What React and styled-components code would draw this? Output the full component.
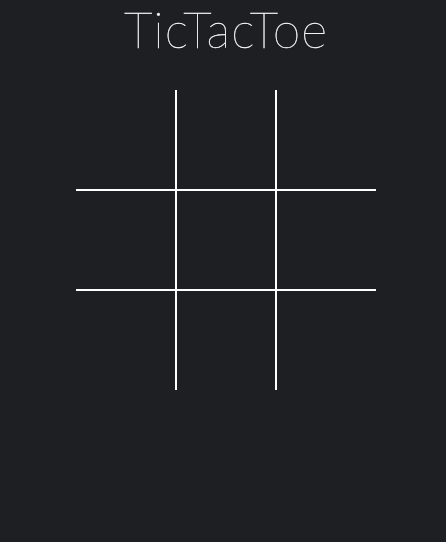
import React from "react";
import styled, { createGlobalStyle } from "styled-components";

const GlobalStyle = createGlobalStyle`
  html, body {
    margin: 0;
    padding: 0;
    background: #1e1f22;
  }
  body {
    font-family: Lato, "Open Sans", sans-serif;
    color: #ffffff;
  }
`;

const Page = styled.div`
  display: flex;
  flex-direction: column;
  align-items: center;
  padding-left: 6px;
  min-height: 542px;
`;

const Title = styled.h1`
  margin: 0;
  padding-top: 1px;
  font-size: 50px;
  line-height: 56px;
  font-weight: 100;
  letter-spacing: 1px;
  color: #f4f4f4;
  -webkit-text-stroke: 0.4px #f4f4f4;
`;

const Board = styled.div`
  margin-top: 33px;
  display: grid;
  grid-template-columns: repeat(3, 100px);
  grid-template-rows: repeat(3, 100px);
`;

const Cell = styled.div`
  box-sizing: border-box;
  border-color: #ffffff;
  border-style: solid;
  border-width: ${({ row, col }) =>
    `${row > 0 ? 1 : 0}px ${col < 2 ? 1 : 0}px ${row < 2 ? 1 : 0}px ${col > 0 ? 1 : 0}px`};
`;

const App = () => {
  const cells = Array.from({ length: 9 }, (_, i) => (
    <Cell key={i} row={Math.floor(i / 3)} col={i % 3} />
  ));

  return (
    <>
      <GlobalStyle />
      <Page>
        <Title>TicTacToe</Title>
        <Board>{cells}</Board>
      </Page>
    </>
  );
};

export default App;
